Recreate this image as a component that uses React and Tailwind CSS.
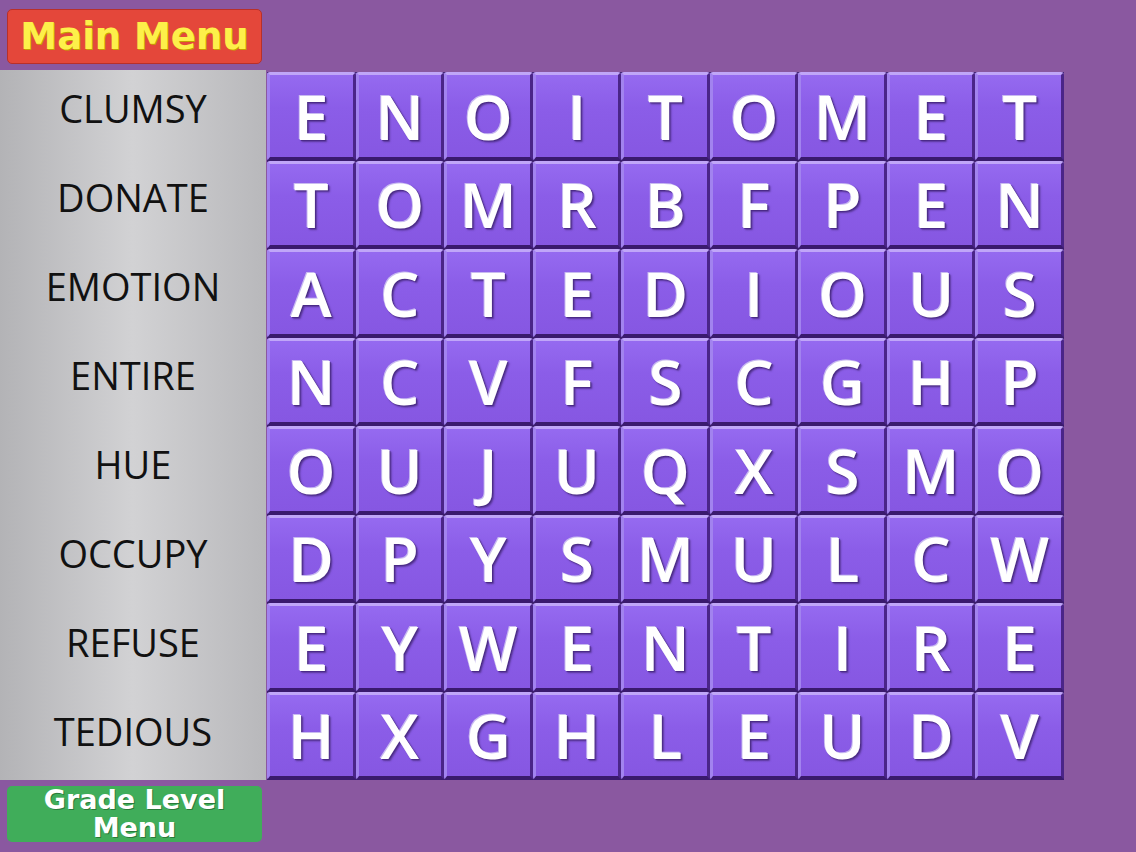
const words = ['CLUMSY', 'DONATE', 'EMOTION', 'ENTIRE', 'HUE', 'OCCUPY', 'REFUSE', 'TEDIOUS']

const rows = [
  'ENOITOMET',
  'TOMRBFPEN',
  'ACTEDIOUS',
  'NCVFSCGHP',
  'OUJUQXSMO',
  'DPYSMULCW',
  'EYWENTIRE',
  'HXGHLEUDV',
]

function Tile({ letter }) {
  return (
    <div className="flex items-center justify-center rounded-[3px] bg-[linear-gradient(180deg,#956af0_0%,#8b5de8_40%,#8657e2_100%)] border-t-[3px] border-l-[3px] border-r-[3px] border-b-[4px] border-t-[#c0a6f8] border-l-[#a283ef] border-r-[#4a2588] border-b-[#3a1a6e]">
      <span
        className="text-[62px] font-semibold leading-none text-white [text-shadow:-1px_-1px_0_#c8baf0,1px_1px_1px_#4a2a85,2px_2px_2px_#5b3a9c]"
        style={{ fontFamily: '"Open Sans", sans-serif' }}
      >
        {letter}
      </span>
    </div>
  )
}

export default function App() {
  return (
    <div className="w-[1136px] h-[852px] bg-[#8a58a0] flex flex-col overflow-hidden">
      <div className="h-[70px] pt-[9px] pl-[7px]">
        <button
          className="w-[255px] h-[55px] rounded-[5px] bg-[#e4473a] border border-[#b8302a] flex items-center justify-center text-[37px] font-black text-[#fdf04a] [text-shadow:1px_1px_0_#c4a000]"
          style={{ fontFamily: '"DejaVu Sans", sans-serif' }}
        >
          Main Menu
        </button>
      </div>

      <div className="flex h-[710px]">
        <div className="w-[266px] h-full bg-[linear-gradient(90deg,#b3b3b6_0%,#d2d2d4_50%,#b8b8bb_100%)]">
          <div className="-mt-[6px] flex flex-col">
            {words.map((w) => (
              <div
                key={w}
                className="h-[89px] flex items-center justify-center text-[38px] text-[#111]"
                style={{ fontFamily: '"Open Sans", sans-serif' }}
              >
                {w}
              </div>
            ))}
          </div>
        </div>

        <div className="ml-px mt-[2px] w-[797px] h-[708px] bg-[#3b1e6a] grid grid-cols-9 grid-rows-8">
          {rows.map((row, r) =>
            row.split('').map((ch, c) => <Tile key={`${r}-${c}`} letter={ch} />)
          )}
        </div>
      </div>

      <div className="pt-[6px] pl-[7px]">
        <button
          className="w-[255px] h-[56px] rounded-[5px] bg-[#40ad5a] flex flex-col items-center justify-center text-[27px] font-black leading-[28px] text-white [text-shadow:1px_1px_0_#2a7a3a]"
          style={{ fontFamily: '"DejaVu Sans", sans-serif' }}
        >
          <span>Grade Level</span>
          <span>Menu</span>
        </button>
      </div>
    </div>
  )
}
